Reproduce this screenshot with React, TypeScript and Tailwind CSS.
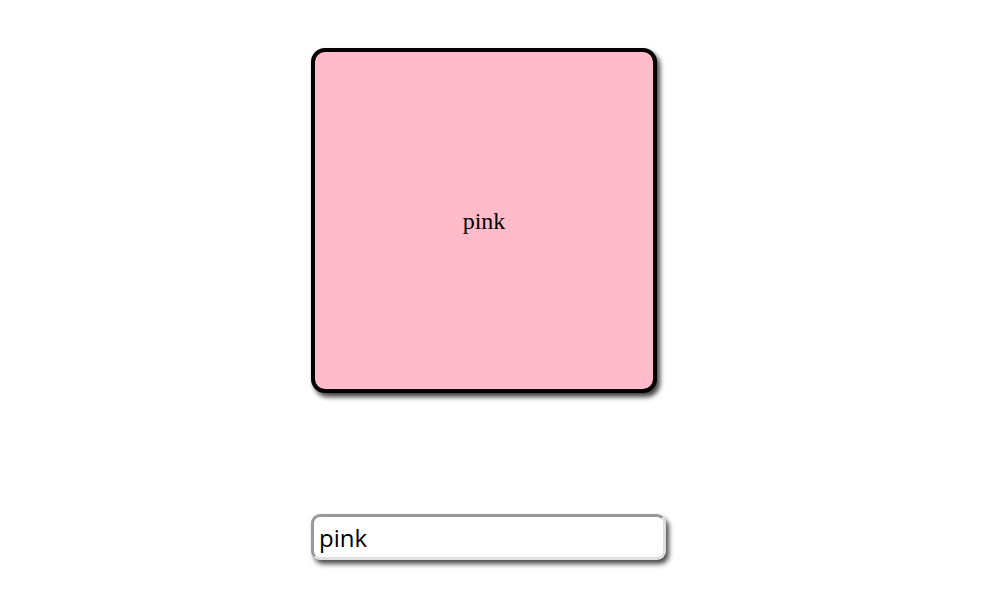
export default function App() {
  return (
    <div className="min-h-[589px] w-[992px] bg-white pl-[311px] pt-[48px]">
      <div className="flex h-[345px] w-[346px] items-center justify-center rounded-[14px] border-4 border-black bg-[#ffbbc9] shadow-[3px_4px_5px_rgba(0,0,0,0.75)]">
        <span className="text-[24px] text-black [font-family:'Liberation_Serif',serif]">pink</span>
      </div>
      <input
        readOnly
        value="pink"
        className="mt-[121px] block h-[46px] w-[355px] rounded-[9px] border-[3px] border-solid border-t-[#999999] border-l-[#999999] border-b-[#e0e0e0] border-r-[#e0e0e0] bg-white px-[5px] text-[24px] text-black shadow-[3px_4px_5px_rgba(0,0,0,0.7)] outline-none [font-family:'Open_Sans',sans-serif]"
      />
    </div>
  );
}
